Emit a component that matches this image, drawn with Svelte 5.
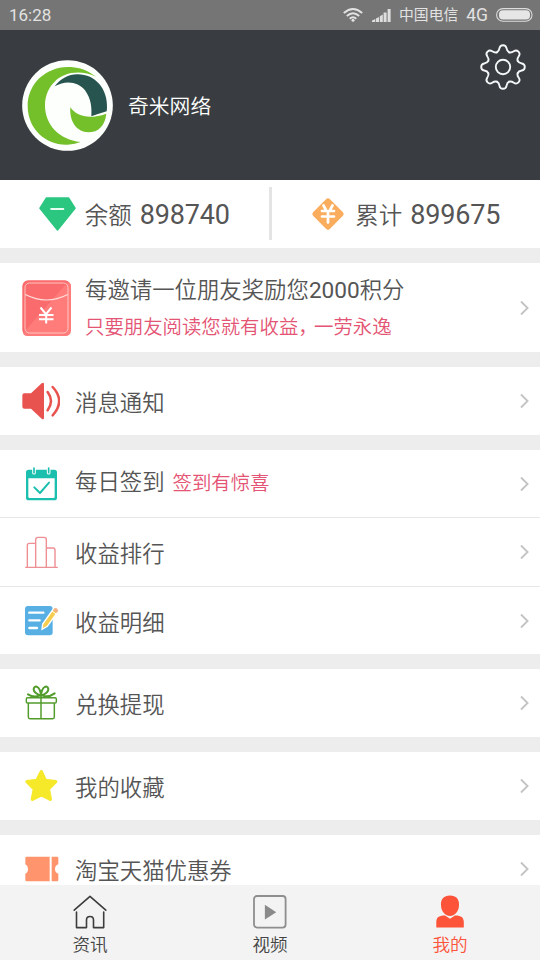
<script lang="ts">
  /**
   * Profile page: account header, balances, menu list and tab bar
   */

  interface MenuItem {
    icon: string;
    label: string;
    hint?: string;
  }

  const groups: MenuItem[][] = [
    [{ icon: 'speaker', label: '消息通知' }],
    [
      { icon: 'calendar', label: '每日签到', hint: '签到有惊喜' },
      { icon: 'chart', label: '收益排行' },
      { icon: 'note', label: '收益明细' },
    ],
    [{ icon: 'gift', label: '兑换提现' }],
    [{ icon: 'star', label: '我的收藏' }],
    [{ icon: 'ticket', label: '淘宝天猫优惠券' }],
  ];

  const tabs = [
    { icon: 'home', label: '资讯' },
    { icon: 'video', label: '视频' },
    { icon: 'user', label: '我的' },
  ];

  let activeTab = $state('user');

  const teeth = [0, 45, 90, 135, 180, 225, 270, 315];
</script>

{#snippet chevron()}
  <svg class="chevron" viewBox="0 0 9 16" aria-hidden="true">
    <path d="M1 1.5 7.6 8 1 14.5" fill="none" stroke="#c3c3c3" stroke-width="1.8" />
  </svg>
{/snippet}

{#snippet menuIcon(name: string)}
  <svg class="menu-icon" viewBox="0 0 114 114" aria-hidden="true">
    {#if name === 'speaker'}
      <path
        d="M7 34H27L59 4Q66 0 66 7V107Q66 115 59 110L27 80H7Q1 80 1 74V40Q1 34 7 34Z"
        fill="#e8534f"
      />
      <path
        d="M77 30Q97 57 77 85M92 15Q131 57 92 100"
        fill="none"
        stroke="#e8534f"
        stroke-width="7.5"
        stroke-linecap="round"
      />
    {:else if name === 'calendar'}
      <path
        fill-rule="evenodd"
        d="M20 14H97Q105 14 105 22V98Q105 106 97 106H20Q12 106 12 98V22Q12 14 20 14ZM19 40V95Q19 99 23 99H94Q98 99 98 95V40Z"
        fill="#1bbfad"
      />
      <path d="M36 9V23M80 9V23" stroke="#fff" stroke-width="11" stroke-linecap="round" />
      <path d="M36 9V23M80 9V23" stroke="#1bbfad" stroke-width="5" stroke-linecap="round" />
      <path
        d="M37 67 54 84 81 53"
        fill="none"
        stroke="#1bbfad"
        stroke-width="6"
        stroke-linecap="round"
        stroke-linejoin="round"
      />
    {:else if name === 'chart'}
      <g fill="none" stroke="#ee8f94" stroke-width="4.2">
        <path d="M16 103V37Q16 31 22 31H41M41 103V20Q41 13 48 13H66Q73 13 73 20V103M73 45H93Q99 45 99 51V103" />
        <path d="M11 103H106" stroke-linecap="round" />
      </g>
    {:else if name === 'note'}
      <rect x="9" y="12" width="83" height="88" rx="9" fill="#58afe4" />
      <path
        d="M22 32H64M22 55H53M22 78H45"
        stroke="#fff"
        stroke-width="7"
        stroke-linecap="round"
      />
      <path
        d="M60 82 62 66 94 21Q98 15 104 19L106 21Q111 25 107 30L76 73Z"
        fill="#f6cd4e"
        stroke="#fff"
        stroke-width="4"
      />
      <path d="M96 21Q99 16 104 19L106 21Q110 24 107 29L104 33 93 25Z" fill="#f4b183" />
      <path d="M90 27 102 36" stroke="#fff" stroke-width="3" />
    {:else if name === 'gift'}
      <g fill="none" stroke="#519c2b" stroke-width="4.4" stroke-linejoin="round">
        <rect x="13" y="41" width="90" height="16" rx="4" />
        <path d="M19 57V99Q19 104 24 104H92Q97 104 97 99V57M57 35V104" />
        <path
          d="M57 35Q34 27 35 15Q37 5 46 9Q55 14 57 35Q59 14 68 9Q77 5 79 15Q80 27 57 35M55 34Q35 42 18 31M59 34Q79 42 98 28"
          stroke-width="6"
          stroke-linecap="round"
        />
      </g>
    {:else if name === 'star'}
      <path
        d="M58 14 70 40 101 44 79 66 85 97 58 83 31 97 37 66 15 44 45 40Z"
        fill="#f5e92a"
        stroke="#f5e92a"
        stroke-width="10"
        stroke-linejoin="round"
      />
    {:else if name === 'ticket'}
      <path
        d="M14 20H83V94H14Q10 94 10 90V71Q18 68 18 57Q18 47 10 43V24Q10 20 14 20ZM89 20H105Q109 20 109 24V43Q99 47 99 57Q99 68 109 71V90Q109 94 105 94H89Z"
        fill="#ff946d"
      />
    {/if}
  </svg>
{/snippet}

{#snippet tabIcon(name: string)}
  <svg class="tab-icon" viewBox="0 0 36 36" aria-hidden="true">
    {#if name === 'home'}
      <path
        d="M2.2 16.2 18 2.4 33.8 16.2M4.5 18V33.6H14.5V26C14.5 21.3 21.5 21.3 21.5 26V33.6H31.7V18"
        fill="none"
        stroke="#3d3d3d"
        stroke-width="1.6"
        stroke-linecap="round"
        stroke-linejoin="round"
      />
    {:else if name === 'video'}
      <rect x="2" y="2" width="31.6" height="31.6" rx="3" fill="none" stroke="#8e8e8e" stroke-width="1.8" />
      <path d="M12.9 10.8 24.2 18.2 12.9 25.5Z" fill="#8a8a8a" />
    {:else}
      <path
        d="M18 1.5C24 1.5 27.5 5 27 11.5C26.8 17.5 22.5 22 18 22C13.5 22 9.2 17.5 9 11.5C8.5 5 12 1.5 18 1.5Z"
        fill="#fc5339"
      />
      <path
        d="M4.3 33.4V28C4.3 22.5 8 21.4 13 21.4L18 24.8 23 21.4C28 21.4 31.8 22.5 31.8 28V33.4Z"
        fill="#fc5339"
      />
    {/if}
  </svg>
{/snippet}

<div class="page">
  <div class="status-bar">
    <span class="clock">16:28</span>
    <svg class="wifi" viewBox="0 0 20 14" aria-hidden="true">
      <g fill="none" stroke="#e2e2e2" stroke-width="1.9">
        <path d="M.8 5Q10-3 19.2 5M3.8 8Q10 2.3 16.2 8M6.7 10.7Q10 7.6 13.3 10.7" />
      </g>
      <circle cx="10" cy="12.3" r="1.5" fill="#e2e2e2" />
    </svg>
    <svg class="signal" viewBox="0 0 19 13" aria-hidden="true">
      <path
        d="M0 11.5 3.3 10V13H0ZM4 9.5 7 8V13H4ZM7.8 7.2 10.8 5.5V13H7.8ZM11.6 3.5H14.6V13H11.6ZM15.6 0H18.6V13H15.6Z"
        fill="#dedede"
      />
    </svg>
    <span class="carrier">中国电信</span>
    <span class="network">4G</span>
    <svg class="battery" viewBox="0 0 37 14" aria-hidden="true">
      <rect x=".6" y=".6" width="35.4" height="12.6" rx="6.3" fill="none" stroke="#dcdcdc" stroke-width="1.1" />
      <rect x="3" y="2.2" width="31" height="9.4" rx="4" fill="#e6e6e6" />
    </svg>
  </div>

  <header class="profile">
    <svg class="avatar" viewBox="0 0 273 273" aria-hidden="true">
      <circle cx="136.5" cy="136.5" r="136" fill="#fcfffc" />
      <path
        d="M222 50C190 26 165 21 137 21C70 22 17 72 17 138C17 207 72 257 137 254Q160 253 176 246C112 240 69 195 69 136C69 105 82 80 98 65C125 37 175 28 222 50Z"
        fill="#74c02b"
      />
      <path
        d="M98 79C114 57 141 43 165 43C220 42 258 87 255 145L254 154Q234 160 208 169C210 143 207 116 189 91C170 66 132 59 98 79Z"
        fill="#28544f"
      />
      <path
        d="M145 142C165 170 202 179 253 161C249 197 229 217 199 217C163 216 142 184 145 142Z"
        fill="#74c02b"
      />
    </svg>
    <span class="username">奇米网络</span>
    <button class="settings" aria-label="设置">
      <svg viewBox="-23 -23 46 46" aria-hidden="true">
        <g fill="none" stroke="#f4f6f7" stroke-width="1.9" stroke-linecap="round">
          {#each teeth as angle}
            <path
              d="M-6.1-14.7C-4.5-15.4-3.9-16.4-3.5-18.8C-3.1-21.2-2.4-21.8 0-21.8C2.4-21.8 3.1-21.2 3.5-18.8C3.9-16.4 4.5-15.4 6.1-14.7"
              transform="rotate({angle})"
            />
          {/each}
          <circle r="7.2" />
        </g>
      </svg>
    </button>
  </header>

  <section class="stats">
    <div class="stat">
      <svg class="gem" viewBox="0 0 37 34" aria-hidden="true">
        <path
          d="M7.5 1H29.5L36 11.2 18.5 33 1 11.2Z"
          fill="#2bc680"
          stroke="#2bc680"
          stroke-width="1.5"
          stroke-linejoin="round"
        />
        <path d="M12.2 11.9H24.3" stroke="#e9fff4" stroke-width="2" stroke-linecap="round" />
      </svg>
      <span class="stat-label">余额</span>
      <span class="stat-value">898740</span>
    </div>
    <div class="stat-divider"></div>
    <div class="stat">
      <svg class="coin" viewBox="0 0 34 34" aria-hidden="true">
        <rect x="5.2" y="5.2" width="23.6" height="23.6" rx="2.5" fill="#fbad5e" transform="rotate(45 17 17)" />
        <path
          d="M12.5 8.5 14.7 12.5M21.5 8.5 19.3 12.5M11 14H23M11 19.5H23M17 14V25.5"
          fill="none"
          stroke="#fff"
          stroke-width="2.7"
          stroke-linecap="round"
        />
      </svg>
      <span class="stat-label">累计</span>
      <span class="stat-value">899675</span>
    </div>
  </section>

  <section class="invite">
    <svg class="envelope" viewBox="0 0 49 56" aria-hidden="true">
      <rect x=".3" y=".3" width="48.4" height="55.4" rx="6" fill="#fa6b6d" />
      <path d="M49 6V50Q49 56 43 56H5Q2 56 1 53L46 2Q49 3 49 6Z" fill="#ff7c7b" />
      <rect x="3" y="3" width="43" height="50" rx="4.5" fill="none" stroke="#ffc5c1" stroke-width="1" />
      <path d="M3.3 14.5Q24.5 25.5 45.7 14.5" fill="none" stroke="#ffe0dc" stroke-width="1.2" />
      <path
        d="M18.5 27.5 24 34.2 29.5 27.5M17 35H31.5M17 39.3H31.5M24.2 34.5V43.5"
        fill="none"
        stroke="#fff"
        stroke-width="2"
      />
    </svg>
    <div class="invite-text">
      <div class="invite-title">每邀请一位朋友奖励您<span class="points">2000</span>积分</div>
      <div class="invite-sub">只要朋友阅读您就有收益<span class="comma">，</span>一劳永逸</div>
    </div>
    {@render chevron()}
  </section>

  {#each groups as group}
    <section class="group">
      {#each group as item}
        <div class="row">
          {@render menuIcon(item.icon)}
          <div class="row-text" class:with-hint={item.hint}>
            <span class="row-label">{item.label}</span>
            {#if item.hint}
              <span class="row-hint">{item.hint}</span>
            {/if}
          </div>
          {@render chevron()}
        </div>
      {/each}
    </section>
  {/each}

  <nav class="tab-bar">
    {#each tabs as tab}
      <button class="tab" class:active={activeTab === tab.icon} onclick={() => (activeTab = tab.icon)}>
        {@render tabIcon(tab.icon)}
        <span>{tab.label}</span>
      </button>
    {/each}
  </nav>
</div>

<style>
  .page {
    position: relative;
    box-sizing: border-box;
    width: 540px;
    height: 960px;
    overflow: hidden;
    background: #ededed;
    color: #555;
    font-family: 'Noto Sans CJK SC', sans-serif;
    font-weight: 350;
  }

  svg {
    display: block;
    flex-shrink: 0;
  }

  button {
    padding: 0;
    border: 0;
    background: none;
    font: inherit;
    color: inherit;
  }

  .status-bar {
    display: flex;
    align-items: center;
    height: 30px;
    padding: 0 7px 0 9px;
    background: #757575;
    color: #e2e2e2;
    font-family: Roboto, 'Noto Sans CJK SC', sans-serif;
    font-weight: 400;
  }

  .clock {
    margin-right: auto;
    font-size: 17px;
    line-height: 30px;
  }

  .wifi {
    width: 20px;
    height: 14px;
  }

  .signal {
    width: 19px;
    height: 13px;
    margin-left: 9px;
  }

  .carrier {
    margin-left: 8px;
    font-size: 14.8px;
    line-height: 30px;
  }

  .network {
    margin-left: 8px;
    font-size: 17.5px;
    line-height: 30px;
  }

  .battery {
    width: 37px;
    height: 14px;
    margin-left: 8px;
  }

  .profile {
    display: flex;
    align-items: center;
    height: 150px;
    padding: 0 14px 0 22px;
    background: #393d41;
    color: #fff;
  }

  .avatar {
    width: 91px;
    height: 91px;
  }

  .username {
    margin-left: 15px;
    font-size: 20.8px;
  }

  .settings {
    align-self: flex-start;
    width: 46px;
    height: 46px;
    margin: 14px 0 0 auto;
  }

  .stats {
    display: flex;
    align-items: center;
    height: 67.5px;
    background: #fff;
  }

  .stat {
    display: flex;
    flex: 1;
    align-items: center;
    justify-content: center;
  }

  .stat-divider {
    width: 3px;
    height: 53px;
    background: #e4e4e4;
  }

  .gem {
    width: 37px;
    height: 34px;
  }

  .coin {
    width: 34px;
    height: 34px;
  }

  .stat-label {
    margin-left: 9px;
    font-size: 23.5px;
    line-height: 34px;
  }

  .coin + .stat-label {
    margin-left: 10px;
  }

  .stat-value {
    margin-left: 8px;
    padding-top: 2px;
    font-family: Roboto, sans-serif;
    font-size: 27px;
    font-weight: 400;
    letter-spacing: -0.2px;
    line-height: 36px;
  }

  .invite {
    display: flex;
    align-items: center;
    box-sizing: border-box;
    height: 89.5px;
    margin-top: 15px;
    padding: 1px 11px 0 22px;
    background: #fff;
  }

  .envelope {
    width: 49px;
    height: 56px;
  }

  .invite-text {
    margin-left: 14px;
    white-space: nowrap;
  }

  .invite-title {
    font-size: 22.4px;
    line-height: 35px;
  }

  .points {
    font-family: Roboto, sans-serif;
    font-size: 22.6px;
    font-weight: 400;
  }

  .invite-sub {
    color: #e45474;
    font-size: 19.4px;
    line-height: 36px;
  }

  .comma {
    margin-right: 6px;
    font-feature-settings: 'halt';
  }

  .chevron {
    width: 9px;
    height: 16px;
    margin-left: auto;
  }

  .group {
    margin-top: 15px;
    background: #fff;
  }

  .row {
    display: flex;
    align-items: center;
    box-sizing: border-box;
    height: 67.7px;
    padding: 0 11px 0 22px;
  }

  .row + .row {
    height: 68.5px;
    border-top: 1px solid #e8e8e8;
  }

  .menu-icon {
    width: 38px;
    height: 38px;
  }

  .row-text {
    display: flex;
    align-items: baseline;
    margin-left: 15px;
    font-size: 22.4px;
    line-height: 32px;
    white-space: nowrap;
  }

  .with-hint {
    margin-bottom: 5px;
  }

  .row-hint {
    margin-left: 8px;
    color: #e45474;
    font-size: 19.4px;
  }

  .tab-bar {
    position: absolute;
    right: 0;
    bottom: 0;
    left: 0;
    display: flex;
    height: 75px;
    background: #f3f3f3;
  }

  .tab {
    display: flex;
    flex: 1;
    flex-direction: column;
    align-items: center;
    padding-top: 9px;
    color: #444;
    font-size: 17.6px;
    line-height: 26px;
  }

  .tab.active {
    color: #fc5339;
  }

  .tab-icon {
    width: 36px;
    height: 36px;
    margin-bottom: 1px;
  }
</style>
